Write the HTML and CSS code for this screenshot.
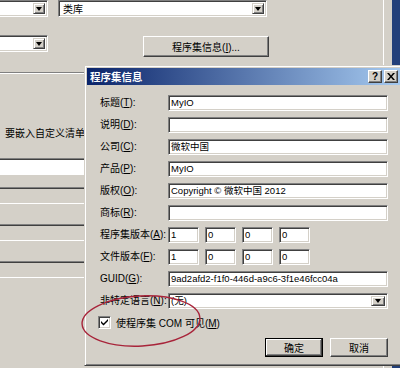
FILE: index.html
```html
<!DOCTYPE html>
<html lang="zh">
<head>
<meta charset="utf-8">
<link rel="stylesheet" href="styles.css">
</head>
<body>
  <div class="page">
    <section class="props">
      <div class="row first">
        <div class="combo narrow"><span class="drop"></span></div>
        <div class="combo wide"><span class="value">类库</span><span class="drop"></span></div>
      </div>
      <div class="row second">
        <div class="combo narrow"><span class="drop"></span></div>
        <button class="btn info">程序集信息(<u>I</u>)...</button>
      </div>
      <div class="rule"></div>
      <p class="hint">要嵌入自定义清单，</p>
      <div class="field"></div>
      <div class="field off"></div>
      <div class="field off gap"></div>
      <div class="field off gap"></div>
    </section>
    <div class="edge"></div>
  </div>

  <div class="dialog">
    <div class="caption">
      <span class="caption-text">程序集信息</span>
      <span class="cap-btn help">?</span>
      <span class="cap-btn close">
        <svg width="8" height="7" viewBox="0 0 8 7"><path d="M0 0h2l2 2.5 2-2.5h2l-3 3.5 3 3.5h-2l-2-2.5-2 2.5h-2l3-3.5z" fill="#000"/></svg>
      </span>
    </div>
    <div class="form">
      <div class="grid">
        <label>标题(<u>T</u>):</label><div class="input">MyIO</div>
        <label>说明(<u>D</u>):</label><div class="input"></div>
        <label>公司(<u>C</u>):</label><div class="input">微软中国</div>
        <label>产品(<u>P</u>):</label><div class="input">MyIO</div>
        <label>版权(<u>O</u>):</label><div class="input">Copyright © 微软中国 2012</div>
        <label>商标(<u>R</u>):</label><div class="input"></div>
        <label>程序集版本(<u>A</u>):</label>
        <div class="version"><div class="input">1</div><div class="input">0</div><div class="input">0</div><div class="input">0</div></div>
        <label>文件版本(<u>F</u>):</label>
        <div class="version"><div class="input">1</div><div class="input">0</div><div class="input">0</div><div class="input">0</div></div>
        <label>GUID(<u>G</u>):</label><div class="input">9ad2afd2-f1f0-446d-a9c6-3f1e46fcc04a</div>
        <label>非特定语言(<u>N</u>):</label><div class="input select">(无)<span class="drop"></span></div>
      </div>
      <div class="check-row">
        <span class="checkbox">
          <svg width="7" height="7" viewBox="0 0 7 7"><path d="M0 2l2.5 2.5 4.5-4.5v2l-4.5 4.5-2.5-2.5z" fill="#000"/></svg>
        </span>
        <span>使程序集 COM 可见(<u>M</u>)</span>
      </div>
      <div class="actions">
        <button class="btn default">确定</button>
        <button class="btn">取消</button>
      </div>
    </div>
  </div>

  <svg class="mark" width="400" height="368" viewBox="0 0 400 368">
    <ellipse cx="141" cy="321" rx="59" ry="25" transform="rotate(-3 141 321)" fill="none" stroke="#a8243a" stroke-width="1.4"/>
  </svg>
</body>
</html>
```

FILE: styles.css
```css
* {
    margin: 0;
    padding: 0;
    box-sizing: border-box;
}
body
{
    width: 400px;
    height: 368px;
    overflow: hidden;
    position: relative;
    background: #d4d0c8;
    font-family: "Liberation Sans", "Noto Sans CJK SC", sans-serif;
    font-size: 10px;
    color: #000;
}
u
{
    text-decoration: underline;
    text-underline-offset: 1px;
}

/* page behind the dialog */
.page
{
    display: flex;
    height: 368px;
}
.props
{
    width: 383px;
}
.edge
{
    width: 17px;
    border-left: 1px solid #fff;
    background: linear-gradient(to right, #d4d0c8 0 8px, #23407a 8px);
}
.row
{
    display: flex;
}
.row.first
{
    height: 17px;
}
.row.second
{
    margin-top: 18px;
}
.combo
{
    position: relative;
    height: 17px;
    background: #fff;
    border: 1px solid;
    border-color: #808080 #fff #fff #808080;
    box-shadow: inset 1px 1px #404040, inset -1px -1px #d4d0c8;
    display: flex;
    align-items: center;
    padding-left: 4px;
}
.combo.narrow
{
    width: 50px;
    margin-left: -2px;
}
.combo.wide
{
    width: 209px;
    margin-left: 10px;
    font-size: 10px;
}
.drop
{
    position: absolute;
    right: 2px;
    top: 2px;
    bottom: 2px;
    width: 12px;
    background: #d4d0c8;
    border: 1px solid;
    border-color: #d4d0c8 #404040 #404040 #d4d0c8;
    box-shadow: inset 1px 1px #fff, inset -1px -1px #808080;
    display: flex;
    align-items: center;
    justify-content: center;
}
.drop::after
{
    content: "";
    border-top: 4px solid #000;
    border-left: 3.5px solid transparent;
    border-right: 3.5px solid transparent;
}
.btn
{
    font-family: "Liberation Sans", "Noto Sans CJK SC", sans-serif;
    font-size: 10px;
    background: #d4d0c8;
    border: 1px solid;
    border-color: #fff #404040 #404040 #fff;
    box-shadow: inset -1px -1px #808080, inset 1px 1px #d4d0c8;
    color: #000;
}
.btn.info
{
    width: 126px;
    height: 21px;
    margin: 1px 0 0 95px;
}
.rule
{
    margin-top: 15px;
    border-top: 1px solid #808080;
    border-bottom: 1px solid #fff;
}
.hint
{
    margin-top: 53px;
    padding-left: 5px;
    line-height: 14px;
}
.field
{
    width: 300px;
    height: 17px;
    margin: 17px 0 0 -2px;
    background: #fff;
    border: 1px solid;
    border-color: #808080 #fff #fff #808080;
    box-shadow: inset 1px 1px #404040;
}
.field.off
{
    background: #d4d0c8;
    margin-top: 12px;
}
.field.off.gap
{
    margin-top: 20px;
}

/* dialog window */
.dialog
{
    position: absolute;
    left: 84px;
    top: 65px;
    width: 319px;
    height: 301px;
    padding: 2px;
    background: #d4d0c8;
    border: 1px solid;
    border-color: #d4d0c8 #404040 #404040 #d4d0c8;
    box-shadow: inset 1px 1px #fff, inset -1px -1px #808080;
}
.caption
{
    height: 17px;
    display: flex;
    align-items: center;
    padding: 0 2px 0 3px;
    background: linear-gradient(to right, #0a246a, #a6caf0);
}
.caption-text
{
    flex: 1;
    color: #fff;
    font-weight: bold;
    font-size: 10.5px;
}
.cap-btn
{
    width: 14px;
    height: 13px;
    background: #d4d0c8;
    border: 1px solid;
    border-color: #fff #404040 #404040 #fff;
    box-shadow: inset -1px -1px #808080;
    display: flex;
    align-items: center;
    justify-content: center;
    font-weight: bold;
    font-size: 10px;
    line-height: 1;
}
.cap-btn.close
{
    margin-left: 2px;
}
.form
{
    padding: 10px 0 0 13px;
}
.grid
{
    display: grid;
    grid-template-columns: 68px 220px;
    grid-auto-rows: 16px;
    row-gap: 6px;
}
.grid label
{
    line-height: 16px;
    white-space: nowrap;
}
.input
{
    position: relative;
    height: 16px;
    background: #fff;
    border: 1px solid;
    border-color: #808080 #fff #fff #808080;
    box-shadow: inset 1px 1px #404040, inset -1px -1px #d4d0c8;
    padding-left: 2px;
    line-height: 14px;
    font-size: 9.5px;
    white-space: nowrap;
    overflow: hidden;
}
.version
{
    display: flex;
    gap: 6px;
}
.version .input
{
    width: 31px;
}
.select .drop
{
    width: 14px;
}
.check-row
{
    margin-top: 7px;
    display: flex;
    align-items: center;
    gap: 5px;
    height: 13px;
}
.checkbox
{
    width: 13px;
    height: 13px;
    margin-left: -2px;
    background: #fff;
    border: 1px solid;
    border-color: #808080 #fff #fff #808080;
    box-shadow: inset 1px 1px #404040, inset -1px -1px #d4d0c8;
    display: flex;
    align-items: center;
    justify-content: center;
}
.actions
{
    width: 288px;
    margin-top: 9px;
    display: flex;
    justify-content: flex-end;
    gap: 7px;
}
.actions .btn
{
    width: 58px;
    height: 19px;
}
.actions .btn.default
{
    outline: 1px solid #000;
    outline-offset: -1px;
    border-color: #fff #404040 #404040 #fff;
    box-shadow: inset -1px -1px #404040, inset 1px 1px #fff, inset -2px -2px #808080;
}

/* red hand-drawn mark */
.mark
{
    position: absolute;
    left: 0;
    top: 0;
    pointer-events: none;
}
```
